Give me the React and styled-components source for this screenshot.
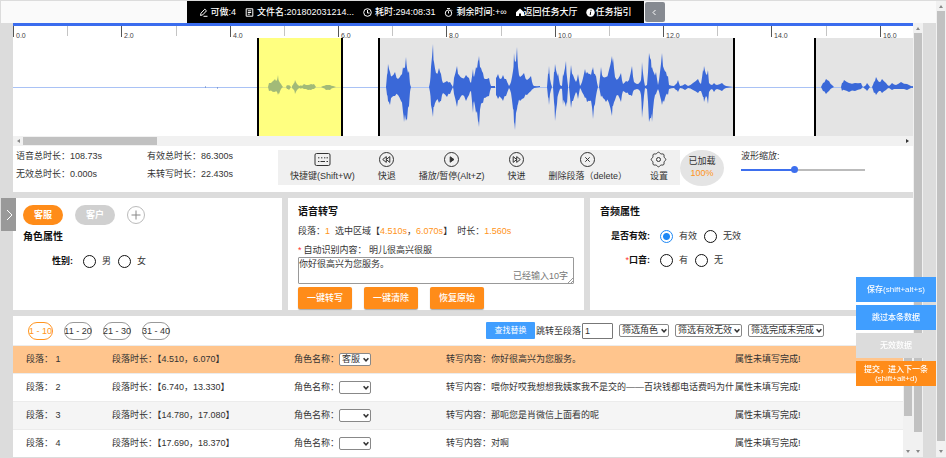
import { useState } from 'react';
import styled, { createGlobalStyle, css } from 'styled-components';

const GlobalStyle = createGlobalStyle`
	* {
		box-sizing: border-box;
	}
	body {
		margin: 0;
		background: #dcdcdc;
		color: #333;
		font: 9px/12px 'Liberation Sans', 'Noto Sans CJK SC', sans-serif;
	}
	button,
	input,
	select,
	textarea {
		margin: 0;
		padding: 0;
		font: inherit;
		color: inherit;
	}
`;

const Page = styled.div`
	display: flex;
	position: relative;
	min-height: 100vh;
	padding: 1px 0 1px 1px;
	overflow: hidden;
`;

const Main = styled.main`
	flex: 1;
	display: flex;
	flex-direction: column;
	min-width: 0;
`;

const Header = styled.header`
	display: flex;
	justify-content: center;
	height: 22px;
	padding-right: 86px;
	background: #fafafa;
`;

const HeaderBar = styled.div`
	display: flex;
	align-items: center;
	justify-content: space-between;
	width: 457px;
	padding: 0 12px;
	background: #000;
	color: #fff;
	font-weight: 500;
	white-space: nowrap;
`;

const HeaderItem = styled.span`
	display: flex;
	align-items: center;
	gap: ${(p) => (p.$tight ? 0 : 3)}px;
	color: #fff;
	text-decoration: none;
`;

const FoldButton = styled.button`
	display: flex;
	align-items: center;
	justify-content: center;
	width: 20px;
	height: 20px;
	margin: 1px 0 0 1px;
	border: 0;
	border-radius: 2px;
	background: #868a91;
	color: #fff;
`;

const Body = styled.div`
	display: flex;
	flex: 1;
	padding: 0 13px 0 12px;
`;

const Content = styled.div`
	flex: 1;
	display: flex;
	flex-direction: column;
	gap: 6px;
	min-width: 0;
`;

const Track = styled.div`
	display: flex;
	flex-direction: column;
	align-items: center;
	justify-content: space-between;
	flex: none;
	width: 10px;
	background: #f1f1f1;
	${(p) =>
		p.$horizontal &&
		css`
			flex-direction: row;
			width: auto;
			height: 10px;
		`}
`;

const Thumb = styled.div`
	flex: 1;
	width: 8px;
	margin-bottom: ${(p) => p.$rest || 0}px;
	background: #c1c1c1;
	${(p) =>
		p.$horizontal &&
		css`
			flex: none;
			width: 134px;
			height: 8px;
			margin: 0 auto 0 0;
		`}
`;

const Arrow = styled.span`
	flex: none;
	width: 10px;
	height: 10px;
	&::after {
		display: block;
		width: 0;
		margin: 4px auto 0;
		border: 2px solid transparent;
		border-top-width: 0;
		border-bottom: 3px solid ${(p) => (p.$dark ? '#333' : '#888')};
		content: '';
	}
	transform: rotate(${(p) => p.$turn || 0}deg);
`;

const WavePanel = styled.section`
	background: #fff;
	border-top: 3px solid #3a6cee;
`;

const WaveChart = styled.svg`
	display: block;
	width: 100%;
	height: 110px;
`;

const InfoRow = styled.div`
	display: flex;
	height: 46px;
	padding: 4px 0 0 3px;
`;

const Stats = styled.dl`
	display: grid;
	grid-template-columns: 131px 131px;
	grid-auto-rows: 12px;
	row-gap: 6px;
	margin: 0;
`;

const Stat = styled.div`
	display: flex;
	dt,
	dd {
		margin: 0;
	}
`;

const Tools = styled.div`
	display: flex;
	justify-content: space-between;
	width: 402px;
	height: 35px;
	padding: 0 12px;
	background: #f0f0f0;
`;

const Tool = styled.button`
	display: flex;
	flex-direction: column;
	align-items: center;
	gap: 2px;
	padding-top: 1px;
	border: 0;
	background: none;
	white-space: nowrap;
`;

const Loaded = styled.div`
	width: 44px;
	height: 36px;
	padding-top: 5px;
	border-radius: 50%;
	background: #e4e4e4;
	text-align: center;
`;

const Orange = styled.span`
	color: #ff9420;
`;

const Zoom = styled.label`
	display: flex;
	flex-direction: column;
	gap: 4px;
	width: 124px;
	margin-left: 17px;
`;

const Slider = styled.input`
	width: 100%;
	height: 7px;
	appearance: none;
	background: linear-gradient(#3d6fee, #3d6fee) 0 3px / ${(p) => p.value}% 2px no-repeat,
		linear-gradient(#bbb, #bbb) 0 3px / 100% 2px no-repeat;
	&::-webkit-slider-thumb {
		width: 7px;
		height: 7px;
		appearance: none;
		border-radius: 50%;
		background: #3d6fee;
	}
`;

const Cards = styled.div`
	display: grid;
	grid-template-columns: 269fr 296fr 323fr;
	gap: 6px;
`;

const Card = styled.section`
	min-width: 0;
	height: 112px;
	padding: 7px 10px 0;
	background: #fff;
`;

const Title = styled.h2`
	margin: 0;
	color: #111;
	font-size: 10px;
	line-height: 14px;
`;

const Tags = styled.div`
	display: flex;
	align-items: center;
	gap: 12px;
	height: 20px;
	margin-bottom: 5px;
`;

const Tag = styled.button`
	width: 40px;
	height: 20px;
	border: 0;
	border-radius: 10px;
	background: ${(p) => (p.$on ? '#ff8c19' : '#d0d0d0')};
	color: #fff;
	font-weight: bold;
`;

const AddTag = styled.button`
	display: flex;
	align-items: center;
	justify-content: center;
	width: 18px;
	height: 18px;
	border: 1px solid #bbb;
	border-radius: 50%;
	background: #fff;
	color: #888;
`;

const RadioRow = styled.fieldset`
	display: flex;
	align-items: center;
	height: 14px;
	margin: 10px 0 0;
	padding: 0;
	border: 0;
`;

const RadioName = styled.span`
	width: 50px;
	margin-right: 10px;
	color: #111;
	font-weight: bold;
	text-align: right;
`;

const RadioLabel = styled.label`
	display: flex;
	align-items: center;
	gap: 6px;
	margin-right: 7px;
`;

const Radio = styled.input`
	width: 13px;
	height: 13px;
	appearance: none;
	border: 1px solid #111;
	border-radius: 50%;
	outline: 0;
	&:checked {
		border-color: #1e88f5;
		background: radial-gradient(circle, #1e88f5 3px, #fff 4px);
	}
`;

const Star = styled.span`
	color: #f33;
	font-weight: normal;
`;

const Line = styled.p`
	display: flex;
	gap: ${(p) => p.$gap || 0}px;
	height: 12px;
	margin: ${(p) => p.$top}px 0 0;
	white-space: pre;
`;

const TextBox = styled.div`
	position: relative;
	width: 278px;
	max-width: 100%;
	height: 27px;
	margin-top: 1px;
`;

const TextArea = styled.textarea`
	display: block;
	width: 100%;
	height: 27px;
	border: 1px solid #999;
	border-radius: 1px;
	line-height: 13px;
	resize: none;
`;

const Counter = styled.span`
	position: absolute;
	right: 6px;
	bottom: 2px;
	color: #777;
`;

const Grip = styled.svg`
	position: absolute;
	right: 1px;
	bottom: 1px;
`;

const Actions = styled.div`
	display: flex;
	gap: 12px;
	margin-top: 3px;
`;

const Action = styled.button`
	width: 54px;
	height: 22px;
	border: 0;
	border-radius: 2px;
	background: #ff8c19;
	box-shadow: 0 1px 1px #aaa;
	color: #fff;
	font-weight: 500;
`;

const ListPanel = styled.section`
	flex: 1;
	background: #fff;
`;

const ListBar = styled.div`
	display: flex;
	align-items: center;
	justify-content: space-between;
	height: 29px;
	padding: 0 89px 0 15px;
`;

const BarGroup = styled.div`
	display: flex;
	align-items: center;
	gap: ${(p) => p.$gap}px;
	white-space: nowrap;
`;

const Pill = styled.button`
	display: flex;
	align-items: center;
	justify-content: center;
	width: ${(p) => (p.$on ? 25 : 28)}px;
	height: 18px;
	border: 1px solid ${(p) => (p.$on ? '#ff9420' : '#999')};
	border-radius: 9px;
	background: #fff;
	color: ${(p) => (p.$on ? '#ff9420' : '#333')};
	white-space: nowrap;
`;

const SearchButton = styled.button`
	width: 49px;
	height: 17px;
	border: 0;
	border-radius: 1px;
	background: #409eff;
	color: #fff;
	font-size: 8px;
`;

const JumpLabel = styled.label`
	display: flex;
	align-items: center;
	gap: 1px;
	margin-left: -5px;
`;

const JumpInput = styled.input`
	width: 31px;
	height: 16px;
	padding: 0 2px;
	border: 1px solid #777;
	border-radius: 1px;
`;

const RoleLabel = styled.label`
	display: flex;
	align-items: center;
`;

const SelectBox = styled.span`
	flex: none;
	position: relative;
	width: ${(p) => p.$width}px;
	height: 13px;
	svg {
		position: absolute;
		top: 4px;
		right: 2px;
		pointer-events: none;
	}
`;

const SelectInput = styled.select`
	display: block;
	width: 100%;
	height: 13px;
	padding: 0 0 0 2px;
	appearance: none;
	border: 1px solid #888;
	border-radius: 2px;
	background: #fff;
	line-height: 11px;
`;

const ListBody = styled.div`
	display: flex;
`;

const Table = styled.table`
	flex: 1;
	width: 0;
	border-collapse: collapse;
	table-layout: fixed;
	col:nth-child(1) {
		width: 99px;
	}
	col:nth-child(2) {
		width: 182px;
	}
	col:nth-child(3) {
		width: 152px;
	}
	col:nth-child(5) {
		width: 168px;
	}
`;

const Row = styled.tr`
	height: 28px;
	background: ${(p) => (p.$on ? '#ffc58d' : '#fff')};
	box-shadow: inset 0 1px #ececec;
	&:nth-child(3) {
		background: #f5f5f5;
	}
`;

const Cell = styled.td`
	padding: 0;
	white-space: pre;
	&:first-child {
		padding-left: 13px;
	}
`;

const SideTab = styled.button`
	display: flex;
	position: absolute;
	top: 198px;
	left: 1px;
	align-items: center;
	justify-content: center;
	width: 15px;
	height: 33px;
	border: 0;
	background: #999;
	color: #fff;
`;

const FloatButtons = styled.div`
	display: flex;
	position: fixed;
	right: 10px;
	bottom: 72px;
	flex-direction: column;
	gap: 3px;
	width: 80px;
`;

const FloatButton = styled.button`
	height: 25px;
	border: 0;
	background: ${(p) => p.$color};
	color: #fff;
	font-size: 8px;
	font-weight: 500;
	line-height: 9px;
`;

// x, height above the line, height below it
const bursts = [
	[[255, 0, 0], [256, 4, 4], [260, 6, 5], [262, 8, 5], [264, 7, 5], [265, 12, 8], [266, 6, 7], [268, 3, 2], [270, 0, 0]],
	[[273, 0, 0], [274, 2, 2], [276, 2, 3], [278, 0, 0]],
	[[279, 1, 1], [281, 4, 3], [282, 7, 7], [284, 3, 3], [287, 1, 1], [288, 2, 2], [289, 1, 1], [291, 3, 2], [295, 2, 3], [298, 3, 3], [301, 3, 2], [303, 0, 0]],
	[[308, 0, 0], [310, 1, 1], [313, 2, 3], [317, 2, 3], [320, 1, 1], [323, 0, 0]],
	[[373, 0, 0], [374, 12, 8], [375, 23, 14], [377, 15, 18], [379, 11, 10], [382, 15, 9], [385, 8, 8], [388, 12, 14], [390, 20, 25], [391, 19, 35], [393, 30, 34], [394, 19, 33], [396, 16, 19], [397, 3, 5], [398, 0, 0]],
	[[416, 0, 0], [417, 5, 5], [418, 20, 18], [420, 43, 30], [421, 25, 20], [423, 14, 14], [426, 19, 16], [428, 13, 14], [430, 4, 6], [434, 6, 10], [437, 5, 7], [440, 0, 0], [441, 9, 7], [444, 21, 20], [446, 12, 13], [449, 9, 8], [453, 12, 14], [456, 9, 8], [458, 4, 4], [460, 18, 26], [461, 10, 14], [463, 20, 26], [465, 26, 34], [466, 31, 40], [468, 19, 17], [470, 14, 16], [472, 8, 11], [476, 9, 9], [478, 1, 1], [482, 1, 1]],
	[[483, 9, 8], [485, 13, 12], [488, 8, 11], [490, 12, 14], [493, 8, 9], [496, 1, 1], [498, 5, 6], [500, 16, 22], [501, 34, 35], [502, 25, 43], [504, 40, 22], [505, 20, 17], [507, 10, 14], [511, 14, 11], [514, 7, 8], [518, 11, 4], [520, 2, 2], [521, 1, 1], [527, 1, 0]],
	[[534, 0, 0], [535, 13, 10], [536, 21, 18], [537, 8, 7], [539, 0, 0]],
	[[540, 0, 0], [541, 15, 15], [542, 23, 34], [544, 13, 17], [545, 14, 8], [547, 2, 2], [549, 1, 2], [550, 13, 18], [551, 14, 14], [553, 26, 20], [554, 10, 17], [555, 1, 1]],
	[[556, 0, 0], [558, 22, 21], [560, 12, 14], [563, 5, 5], [565, 13, 12], [567, 1, 1], [569, 5, 5], [572, 18, 11], [574, 15, 15], [577, 13, 14], [579, 17, 20], [580, 20, 32], [582, 13, 17], [583, 11, 9], [585, 0, 0]],
	[[586, 0, 0], [588, 20, 10], [590, 10, 11], [593, 10, 15], [596, 17, 16], [599, 31, 29], [600, 29, 19], [602, 10, 13], [605, 8, 8], [608, 14, 15], [610, 3, 4], [613, 6, 6], [616, 7, 8], [619, 21, 9], [621, 5, 3], [624, 3, 2], [627, 5, 4], [628, 7, 8], [629, 25, 31], [630, 14, 21], [632, 1, 1], [634, 2, 2], [636, 34, 35], [638, 27, 31], [639, 20, 35], [641, 14, 13], [643, 15, 7], [645, 2, 2], [647, 15, 9], [649, 34, 18], [651, 18, 15], [653, 15, 8], [655, 11, 8], [656, 2, 2], [661, 1, 1], [663, 3, 3], [665, 7, 5], [667, 1, 1], [672, 3, 3], [675, 1, 1], [680, 4, 3], [685, 8, 6], [688, 3, 4], [690, 17, 10], [691, 21, 15], [693, 13, 9], [695, 17, 17], [696, 4, 5], [699, 2, 2], [701, 4, 5], [704, 2, 2], [709, 4, 4], [713, 1, 1], [720, 0, 0]],
	[[808, 0, 0], [810, 4, 4], [813, 8, 7], [816, 6, 4], [819, 2, 1], [821, 0, 0]],
	[[828, 0, 0], [829, 4, 4], [831, 7, 3], [836, 4, 5], [842, 4, 4], [848, 4, 2], [850, 0, 0], [852, 1, 2], [854, 4, 4], [857, 0, 0]],
	[[859, 0, 0], [861, 5, 6], [863, 10, 8], [866, 5, 4], [869, 8, 6], [873, 4, 3], [876, 1, 1], [879, 4, 3], [883, 2, 2], [888, 5, 2], [894, 3, 3], [898, 1, 1], [900, 1, 1]],
];

const MID = 61;

// rough edge between two key points, so the outline looks sampled
const outline = (points, side) => {
	const out = [];
	points.forEach((p, i) => {
		out.push([p[0], p[side]]);
		const next = points[i + 1];
		if (next) {
			const mean = (p[side] + next[side]) / 2;
			out.push([(p[0] + next[0]) / 2, mean * (i % 2 ? 0.8 : 0.95)]);
		}
	});
	return out;
};

const burstPath = (points) => {
	const top = outline(points, 1).map(([x, h]) => `${x},${MID - h}`);
	const bottom = outline(points, 2).map(([x, h]) => `${x},${MID + h}`);
	return `M${top.join('L')}L${bottom.reverse().join('L')}Z`;
};

const ticks = Array.from({ length: 17 }, (_, i) => i);

const Waveform = () => (
	<WaveChart viewBox="0 0 900 110" preserveAspectRatio="xMinYMin slice" aria-label="波形">
		<rect x="245" y="12" width="84" height="98" fill="#ffff80" />
		<rect x="366" y="12" width="355" height="98" fill="#e4e4e4" />
		<rect x="802" y="12" width="98" height="98" fill="#e4e4e4" />
		{ticks.map((i) => (
			<rect
				key={i}
				x={Math.round((i * 325) / 6)}
				y="0"
				width="1"
				height={i % 2 ? 10 : 11}
				fill={i % 2 ? '#c4c4c4' : '#555'}
			/>
		))}
		{ticks
			.filter((i) => i % 2 === 0)
			.map((i) => (
				<text key={i} x={Math.round((i * 325) / 6) + 3} y="12" fontSize="7" fill="#444">
					{i}.0
				</text>
			))}
		<path d="M0 61.5H245M329 61.5H900" stroke="#a9c2f5" />
		<path d="M245 61.5H329" stroke="#e0e68a" />
		<path d="M192 61h1M204 62h1" stroke="#5577bb" />
		{bursts.map((points, i) => (
			<path key={i} d={burstPath(points)} fill={i < 4 ? '#a2ba78' : '#3a68d8'} />
		))}
		{[244, 328, 365, 720, 801].map((x) => (
			<rect key={x} x={x} y="12" width="2" height="98" fill="#000" />
		))}
	</WaveChart>
);

const Icon = ({ size = 9, width = 1, children, ...rest }) => (
	<svg
		width={size}
		height={size}
		viewBox={`0 0 ${size} ${size}`}
		fill="none"
		stroke="currentColor"
		strokeWidth={width}
		{...rest}
	>
		{children}
	</svg>
);

const PenIcon = () => (
	<Icon>
		<path d="M1.5 7.5 2 5.2 5.8 1.2 7.5 2.8 3.8 6.8ZM4.5 8.3h4" />
	</Icon>
);
const FileIcon = () => (
	<Icon>
		<path d="M1.2.8h6.6v7.4H1.2zM2.8 2.8h3.4M2.8 4.5h3.4M2.8 6.2h2" />
	</Icon>
);
const ClockIcon = () => (
	<Icon>
		<circle cx="4.5" cy="4.5" r="3.8" />
		<path d="M4.5 2v3h2" />
	</Icon>
);
const TimerIcon = () => (
	<Icon>
		<circle cx="4.5" cy="5.2" r="3.2" />
		<path d="M3 .6h3M4.5 3.2v2.2M7 1.6l1 1" />
	</Icon>
);
const HomeIcon = () => (
	<Icon size={8}>
		<path d="M0 4.3 4 .5l4 3.8V8H5V5.5H3V8H0z" fill="currentColor" stroke="none" />
	</Icon>
);
const InfoIcon = () => (
	<Icon>
		<circle cx="4.5" cy="4.5" r="4.2" fill="currentColor" stroke="none" />
		<path d="M5 1.8v1.1M4.7 3.7 4.2 7" stroke="#000" />
	</Icon>
);

const KeyboardIcon = () => (
	<Icon size={17}>
		<rect x="1" y="2.5" width="15" height="12" rx="1.5" />
		<path d="M4 6.8h1.4M7 6.8h1.4M10 6.8h1.4M12.5 6.8H14M4 10.5h1.4M6.5 10.5h4.5M12.5 10.5H14" />
	</Icon>
);
const RewindIcon = () => (
	<Icon size={17}>
		<circle cx="8.5" cy="8.5" r="7" />
		<path d="M8.3 5.6v5.8L4.7 8.5ZM11.8 5.6v5.8L8.3 8.5Z" />
	</Icon>
);
const PlayIcon = () => (
	<Icon size={17}>
		<circle cx="8.5" cy="8.5" r="7" />
		<path d="M7.2 5.8v5.4l3.8-2.7Z" fill="currentColor" />
	</Icon>
);
const ForwardIcon = () => (
	<Icon size={17}>
		<circle cx="8.5" cy="8.5" r="7" />
		<path d="M8.7 5.6v5.8l3.6-2.9ZM5.2 5.6v5.8l3.5-2.9Z" />
	</Icon>
);
const CloseIcon = () => (
	<Icon size={17}>
		<circle cx="8.5" cy="8.5" r="7" />
		<path d="m6.3 6.3 4.4 4.4M10.7 6.3l-4.4 4.4" />
	</Icon>
);

// eight soft teeth round the centre
const gearPoints = Array.from({ length: 64 }, (_, i) => {
	const a = (i * Math.PI) / 32;
	const r = 6.7 + 0.6 * Math.cos(8 * a);
	return `${(8.5 + r * Math.sin(a)).toFixed(2)},${(8.5 - r * Math.cos(a)).toFixed(2)}`;
}).join(' ');

const GearIcon = () => (
	<Icon size={17}>
		<polygon points={gearPoints} strokeLinejoin="round" />
		<circle cx="8.5" cy="8.5" r="2" />
	</Icon>
);

const tools = [
	['快捷键(Shift+W)', KeyboardIcon],
	['快退', RewindIcon],
	['播放/暂停(Alt+Z)', PlayIcon],
	['快进', ForwardIcon],
	['删除段落（delete）', CloseIcon],
	['设置', GearIcon],
];

const rows = [
	['1', '4.510，6.070', '客服', '你好很高兴为您服务。'],
	['2', '6.740，13.330', '', '喂你好哎我想想我姨家我不是交的——百块钱都电话费吗为什'],
	['3', '14.780，17.080', '', '那呃您是肖微信上面看的呢'],
	['4', '17.690，18.370', '', '对啊'],
];

const Select = ({ width, label, options }) => (
	<SelectBox $width={width}>
		<SelectInput aria-label={label}>
			{options.map((o) => (
				<option key={o}>{o}</option>
			))}
		</SelectInput>
		<Icon size={6} width={1.5}>
			<path d="M.6 1.2 3 3.8l2.4-2.6" />
		</Icon>
	</SelectBox>
);

const Radios = ({ name, title, options, checked, required }) => (
	<RadioRow aria-label={title}>
		<RadioName>
			{required && <Star>*</Star>}
			{title}:
		</RadioName>
		{options.map((o) => (
			<RadioLabel key={o}>
				<Radio type="radio" name={name} defaultChecked={o === checked} />
				{o}
			</RadioLabel>
		))}
	</RadioRow>
);

export default function App() {
	const [zoom, setZoom] = useState(43);
	const [text, setText] = useState('你好很高兴为您服务。');

	return (
		<Page>
			<GlobalStyle />
			<Main>
				<Header>
					<HeaderBar>
						<HeaderItem><PenIcon />可做:4</HeaderItem>
						<HeaderItem><FileIcon />文件名:201802031214...</HeaderItem>
						<HeaderItem><ClockIcon />耗时:294:08:31</HeaderItem>
						<HeaderItem><TimerIcon />剩余时间:+∞</HeaderItem>
						<HeaderItem as="a" href="#hall" $tight><HomeIcon />返回任务大厅</HeaderItem>
						<HeaderItem as="a" href="#guide" $tight><InfoIcon />任务指引</HeaderItem>
					</HeaderBar>
					<FoldButton aria-label="收起">
						<Icon size={7}><path d="M4.5 1 2 3.5 4.5 6" /></Icon>
					</FoldButton>
				</Header>
				<Body>
					<Content>
						<WavePanel>
							<Waveform />
							<Track $horizontal>
								<Arrow $turn={-90} />
								<Thumb $horizontal />
								<Arrow $turn={90} $dark />
							</Track>
							<InfoRow>
								<Stats>
									<Stat><dt>语音总时长：</dt><dd>108.73s</dd></Stat>
									<Stat><dt>有效总时长：</dt><dd>86.300s</dd></Stat>
									<Stat><dt>无效总时长：</dt><dd>0.000s</dd></Stat>
									<Stat><dt>未转写时长：</dt><dd>22.430s</dd></Stat>
								</Stats>
								<Tools>
									{tools.map(([label, ToolIcon]) => (
										<Tool key={label}>
											<ToolIcon />
											{label}
										</Tool>
									))}
								</Tools>
								<Loaded>
									已加载
									<br />
									<Orange>100%</Orange>
								</Loaded>
								<Zoom>
									波形缩放:
									<Slider type="range" value={zoom} onChange={(e) => setZoom(e.target.value)} />
								</Zoom>
							</InfoRow>
						</WavePanel>

						<Cards>
							<Card>
								<Tags>
									<Tag $on>客服</Tag>
									<Tag>客户</Tag>
									<AddTag aria-label="添加角色">
										<Icon size={10}><path d="M5 .5v9M.5 5h9" /></Icon>
									</AddTag>
								</Tags>
								<Title>角色属性</Title>
								<Radios name="sex" title="性别" options={['男', '女']} />
							</Card>
							<Card>
								<Title>语音转写</Title>
								<Line $top={6} $gap={5}>
									<span>段落：<Orange>1</Orange></span>
									<span>选中区域【<Orange>4.510s</Orange>，<Orange>6.070s</Orange>】</span>
									<span>时长：<Orange>1.560s</Orange></span>
								</Line>
								<Line $top={7} $gap={2}>
									<Star>*</Star>
									<label htmlFor="transcript">自动识别内容： 明儿很高兴很服</label>
								</Line>
								<TextBox>
									<TextArea id="transcript" value={text} onChange={(e) => setText(e.target.value)} />
									<Counter>已经输入{text.length}字</Counter>
									<Grip width="5" height="5" stroke="#999"><path d="M0 5 5 0M3 5l2-2" /></Grip>
								</TextBox>
								<Actions>
									<Action>一键转写</Action>
									<Action>一键清除</Action>
									<Action>恢复原始</Action>
								</Actions>
							</Card>
							<Card>
								<Title>音频属性</Title>
								<Radios name="valid" title="是否有效" options={['有效', '无效']} checked="有效" />
								<Radios name="accent" title="口音" options={['有', '无']} required />
							</Card>
						</Cards>

						<ListPanel>
							<ListBar>
								<BarGroup $gap={11}>
									<Pill $on>1 - 10</Pill>
									<Pill>11 - 20</Pill>
									<Pill>21 - 30</Pill>
									<Pill>31 - 40</Pill>
								</BarGroup>
								<BarGroup $gap={6}>
									<SearchButton>查找替换</SearchButton>
									<JumpLabel>
										跳转至段落
										<JumpInput defaultValue="1" />
									</JumpLabel>
									<Select width={50} label="角色" options={['筛选角色']} />
									<Select width={67} label="有效" options={['筛选有效无效']} />
									<Select width={76} label="完成" options={['筛选完成未完成']} />
								</BarGroup>
							</ListBar>
							<ListBody>
								<Table>
									<colgroup><col /><col /><col /><col /><col /></colgroup>
									<tbody>
										{rows.map(([id, span, role, words], i) => (
											<Row key={id} $on={i === 0}>
												<Cell>段落： {id}</Cell>
												<Cell>段落时长：【{span}】</Cell>
												<Cell>
													<RoleLabel>
														角色名称：
														<Select width={32} label="角色名称" options={[role]} />
													</RoleLabel>
												</Cell>
												<Cell>转写内容：{words}</Cell>
												<Cell>属性未填写完成!</Cell>
											</Row>
										))}
									</tbody>
								</Table>
								<Track>
									<Arrow />
									<Thumb $rest={31} />
									<Arrow $turn={180} />
								</Track>
							</ListBody>
						</ListPanel>
					</Content>
					<Track>
						<Arrow />
						<Thumb $rest={15} />
						<Arrow $turn={180} />
					</Track>
				</Body>
			</Main>
			<Track>
				<Arrow />
				<Thumb $rest={6} />
				<Arrow $turn={180} />
			</Track>

			<SideTab aria-label="展开">
				<Icon size={14}><path d="m5 2 5 5-5 5" /></Icon>
			</SideTab>
			<FloatButtons>
				<FloatButton $color="#409eff">保存(shift+alt+s)</FloatButton>
				<FloatButton $color="#409eff">跳过本条数据</FloatButton>
				<FloatButton $color="#dcdcdc">无效数据</FloatButton>
				<FloatButton $color="#ff8c19">提交，进入下一条(shift+alt+d)</FloatButton>
			</FloatButtons>
		</Page>
	);
}
